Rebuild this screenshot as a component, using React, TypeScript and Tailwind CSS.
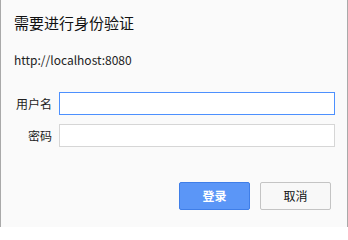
import React from "react";

export default function App() {
  return (
    <div
      className="w-[348px] h-[227px] bg-[#fafafa] border-l border-r border-[#a9a9a9] flex flex-col text-[#222]"
      style={{ fontFamily: '"Microsoft YaHei", "Noto Sans CJK SC", "Noto Sans", sans-serif' }}
    >
      <div className="pl-[13px] pt-[13px] text-[15px] leading-[20px] text-[#111]">需要进行身份验证</div>
      <div className="pl-[13px] pt-[19px] text-[12px] leading-[16px] text-[#222]">http://localhost:8080</div>
      <div className="pl-[12px] pt-[24px] flex flex-col gap-[9px]">
        <div className="flex items-center">
          <div className="w-[39px] text-right text-[12px] leading-[16px]">用户名</div>
          <div className="ml-[7px] w-[276px] h-[23px] border border-[#4d90fe] bg-white" />
        </div>
        <div className="flex items-center">
          <div className="w-[39px] text-right text-[12px] leading-[16px]">密码</div>
          <div className="ml-[7px] w-[276px] h-[23px] border border-[#d6d6d6] bg-white" />
        </div>
      </div>
      <div className="flex justify-end gap-[10px] pr-[16px] pt-[35px]">
        <button className="w-[71px] h-[28px] rounded-[2px] bg-[#5b96f7] border border-[#3f7ee8] text-white text-[12px] font-bold">
          登录
        </button>
        <button className="w-[71px] h-[28px] rounded-[2px] bg-[#f8f8f8] border border-[#c4c4c4] text-[#111] text-[12px]">
          取消
        </button>
      </div>
    </div>
  );
}
